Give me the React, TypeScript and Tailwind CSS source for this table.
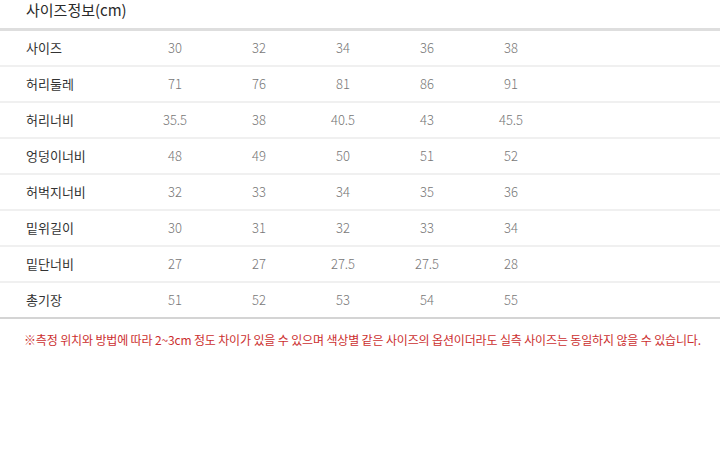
import React from "react";

const rows: [string, string[]][] = [
  ["사이즈", ["30", "32", "34", "36", "38"]],
  ["허리둘레", ["71", "76", "81", "86", "91"]],
  ["허리너비", ["35.5", "38", "40.5", "43", "45.5"]],
  ["엉덩이너비", ["48", "49", "50", "51", "52"]],
  ["허벅지너비", ["32", "33", "34", "35", "36"]],
  ["밑위길이", ["30", "31", "32", "33", "34"]],
  ["밑단너비", ["27", "27", "27.5", "27.5", "28"]],
  ["총기장", ["51", "52", "53", "54", "55"]],
];

const font = { fontFamily: '"Noto Sans CJK KR", "Noto Sans", sans-serif' };

export default function App() {
  return (
    <div className="w-[720px] h-[471px] bg-white overflow-hidden" style={font}>
      <div className="h-[28px] pl-[26px] pt-[1px] text-[15px] leading-[18px] text-[#2a2a2a]">
        사이즈정보(cm)
      </div>
      <div className="border-t-[3px] border-[#dedede]">
        {rows.map(([label, vals], i) => (
          <div
            key={label}
            className={
              "flex h-[36px] items-center border-b-2 " +
              (i === rows.length - 1 ? "border-[#d4d4d4]" : "border-[#f0f0f0]")
            }
          >
            <div className="w-[133px] pl-[26px] text-[13px] text-[#333]">{label}</div>
            {vals.map((v, j) => (
              <div key={j} className="w-[84px] text-center text-[13px] text-[#777] font-light">
                {v}
              </div>
            ))}
          </div>
        ))}
      </div>
      <div className="pl-[24px] pt-[12px] text-[12px] leading-[18px] text-[#cc2f2f] tracking-[-0.15px]">
        ※측정 위치와 방법에 따라 2~3cm 정도 차이가 있을 수 있으며 색상별 같은 사이즈의 옵션이더라도 실측 사이즈는 동일하지 않을 수 있습니다.
      </div>
    </div>
  );
}
